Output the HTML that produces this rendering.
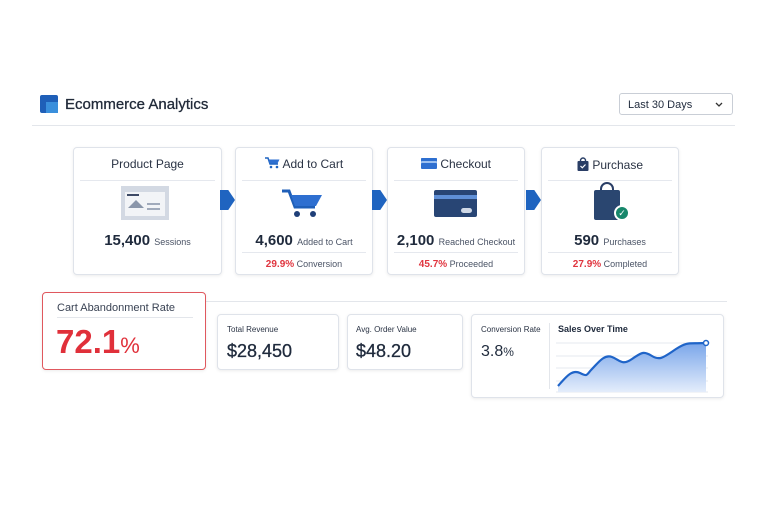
<!DOCTYPE html><html><head><style>
*{margin:0;padding:0;box-sizing:border-box}
body{width:768px;height:512px;background:#fff;font-family:"Liberation Sans",sans-serif;color:#1f2a3c;position:relative;overflow:hidden}
.a{position:absolute}
.card{position:absolute;background:#fff;border:1px solid #dfe3ea;border-radius:4px;box-shadow:0 1px 3px rgba(0,0,0,.08)}
.hd{position:absolute;left:0;right:0;top:9px;text-align:center;font-size:12px;color:#2a3344}
.d1{position:absolute;left:6px;right:6px;top:32px;border-top:1px solid #e5e8ee}
.d2{position:absolute;left:6px;right:6px;top:104px;border-top:1px solid #e5e8ee}
.num{position:absolute;left:0;right:0;top:84px;text-align:center;font-size:15px;font-weight:bold;color:#1f2a3c}
.num span{font-size:9px;font-weight:normal;color:#4a5365}
.pc{position:absolute;left:0;right:0;top:111px;text-align:center;font-size:9px;color:#4a5365}
.pc b{color:#e0353f;font-size:10px}
.ar{position:absolute;width:15px;height:20px;background:#1f64c0;clip-path:polygon(0 0,55% 0,100% 50%,55% 100%,0 100%)}
.lbl{font-size:8px;color:#2a3344}
</style></head><body>
<div class="a" style="left:40px;top:95px;width:18px;height:18px;background:#1f5fb8;border-radius:2px"></div>
<div class="a" style="left:46px;top:102px;width:12px;height:11px;background:#3a8fdc"></div>
<div class="a" style="left:65px;top:96px;font-size:15px;color:#222b3a;-webkit-text-stroke:0.3px #222b3a">Ecommerce Analytics</div>
<div class="a" style="left:619px;top:93px;width:114px;height:22px;border:1px solid #c9ced6;border-radius:3px;font-size:11px;padding:5px 0 0 8px">Last 30 Days<svg style="position:absolute;right:9px;top:8px" width="8" height="5" viewBox="0 0 8 5"><path d="M1 1l3 3 3-3" stroke="#333" stroke-width="1.3" fill="none"/></svg></div>
<div class="a" style="left:32px;top:125px;width:703px;border-top:1px solid #e3e6eb"></div>

<div class="card" style="left:73px;top:147px;width:149px;height:128px">
<div class="hd">Product Page</div><div class="d1"></div>
<div class="a" style="left:47px;top:38px;width:48px;height:34px;background:#d3d9e3"></div>
<div class="a" style="left:51px;top:44px;width:40px;height:24px;background:#f2f4f7"></div>
<div class="a" style="left:53px;top:46px;width:12px;height:2px;background:#3d4a66"></div>
<div class="a" style="left:54px;top:52px;width:0;height:0;border-left:8px solid transparent;border-right:8px solid transparent;border-bottom:8px solid #8a96aa"></div>
<div class="a" style="left:73px;top:55px;width:13px;height:2px;background:#a0aabb"></div>
<div class="a" style="left:73px;top:60px;width:13px;height:2px;background:#a0aabb"></div>
<div class="num">15,400 <span>Sessions</span></div>
</div>
<div class="ar" style="left:220px;top:190px"></div>
<div class="card" style="left:235px;top:147px;width:138px;height:128px">
<div class="hd"><svg width="15" height="12" viewBox="0 0 15 12" style="vertical-align:-1px"><path d="M0 1h3l2 6h8" stroke="#1f64c0" stroke-width="1.5" fill="none"/><path d="M3.5 2.5h11l-2 4h-8z" fill="#2e6fd0"/><circle cx="6" cy="10" r="1.3" fill="#1f64c0"/><circle cx="12" cy="10" r="1.3" fill="#1f64c0"/></svg> Add to Cart</div><div class="d1"></div>
<svg class="a" style="left:44px;top:40px" width="44" height="30" viewBox="0 0 44 30"><path d="M2 3h7l6 16h20" stroke="#1f5fb8" stroke-width="3" fill="none"/><path d="M11 7h31l-6 11H15z" fill="#2e6fd0"/><circle cx="17" cy="26" r="3" fill="#1f3f78"/><circle cx="33" cy="26" r="3" fill="#1f3f78"/></svg>
<div class="num">4,600 <span>Added to Cart</span></div><div class="d2"></div>
<div class="pc"><b>29.9%</b> Conversion</div>
</div>
<div class="ar" style="left:372px;top:190px"></div>
<div class="card" style="left:387px;top:147px;width:138px;height:128px">
<div class="hd"><span style="display:inline-block;width:16px;height:11px;background:#2e6fd0;border-radius:1px;vertical-align:-1px;box-shadow:inset 0 3px 0 #2e6fd0,inset 0 5px 0 #9cc0f0"></span> Checkout</div><div class="d1"></div>
<div class="a" style="left:46px;top:42px;width:43px;height:27px;background:#284574;border-radius:2px"></div>
<div class="a" style="left:46px;top:47px;width:43px;height:4px;background:#5f8fd6"></div>
<div class="a" style="left:73px;top:60px;width:11px;height:5px;background:#cfd8e6;border-radius:3px"></div>
<div class="num">2,100 <span>Reached Checkout</span></div><div class="d2"></div>
<div class="pc"><b>45.7%</b> Proceeded</div>
</div>
<div class="ar" style="left:526px;top:190px"></div>
<div class="card" style="left:541px;top:147px;width:138px;height:128px">
<div class="hd"><svg width="12" height="14" viewBox="0 0 12 14" style="vertical-align:-2px"><path d="M3.5 5V3.5a2.5 2.5 0 0 1 5 0V5" stroke="#2a3e66" stroke-width="1.4" fill="none"/><rect x="0.5" y="4" width="11" height="10" rx="1" fill="#2a3e66"/><path d="M3.5 9l1.8 1.8 3.2-3.3" stroke="#fff" stroke-width="1.2" fill="none"/></svg> Purchase</div><div class="d1"></div>
<div class="a" style="left:58px;top:34px;width:14px;height:14px;border:2px solid #2a3e66;border-radius:7px 7px 0 0"></div>
<div class="a" style="left:52px;top:42px;width:26px;height:30px;background:#2a4670;border-radius:2px"></div>
<div class="a" style="left:72px;top:57px;width:16px;height:16px;background:#17876b;border:2px solid #fff;border-radius:50%;color:#fff;font-size:9px;text-align:center;line-height:12px">&#10003;</div>
<div class="num">590 <span>Purchases</span></div><div class="d2"></div>
<div class="pc"><b>27.9%</b> Completed</div>
</div>

<div class="a" style="left:205px;top:301px;width:522px;border-top:1px solid #e3e6eb"></div>
<div class="card" style="left:42px;top:292px;width:164px;height:78px;border:1.5px solid #e0585e">
<div class="a" style="left:14px;top:9px;font-size:11px;color:#3a4354">Cart Abandonment Rate</div>
<div class="a" style="left:14px;top:24px;width:136px;border-top:1px solid #e3e6eb"></div>
<div class="a" style="left:13px;top:30px;font-size:33px;font-weight:bold;color:#e0303a">72.1<span style="font-size:22px;font-weight:normal">%</span></div>
</div>
<div class="card" style="left:217px;top:314px;width:122px;height:56px">
<div class="a lbl" style="left:9px;top:10px">Total Revenue</div>
<div class="a" style="left:9px;top:26px;font-size:18px;-webkit-text-stroke:0.3px #1f2a3c">$28,450</div></div>
<div class="card" style="left:347px;top:314px;width:116px;height:56px">
<div class="a lbl" style="left:8px;top:10px">Avg. Order Value</div>
<div class="a" style="left:8px;top:26px;font-size:18px;-webkit-text-stroke:0.3px #1f2a3c">$48.20</div></div>
<div class="card" style="left:471px;top:314px;width:253px;height:84px">
<div class="a lbl" style="left:9px;top:10px">Conversion Rate</div>
<div class="a" style="left:9px;top:28px;font-size:16px">3.8<span style="font-size:12px">%</span></div>
<div class="a" style="left:77px;top:8px;height:66px;border-left:1px solid #e3e6eb"></div>
<div class="a" style="left:86px;top:9px;font-size:9px;font-weight:bold">Sales Over Time</div>
<svg class="a" style="left:84px;top:24px" width="160" height="56" viewBox="0 0 160 56">
<g stroke="#e6e9ef" stroke-width="1"><line x1="0" y1="4" x2="152" y2="4"/><line x1="0" y1="17" x2="152" y2="17"/><line x1="0" y1="29" x2="152" y2="29"/><line x1="0" y1="42" x2="152" y2="42"/><line x1="0" y1="53" x2="152" y2="53"/></g>
<defs><linearGradient id="g" x1="0" y1="0" x2="0" y2="1"><stop offset="0" stop-color="#7aa6ea"/><stop offset="1" stop-color="#e4edfb"/></linearGradient></defs>
<path d="M2 47C10 38 16 30 24 34S30 36 36 30 48 15 56 18 66 27 76 20 88 12 96 17 108 18 120 10 134 5 150 4V53H2Z" fill="url(#g)"/>
<path d="M2 47C10 38 16 30 24 34S30 36 36 30 48 15 56 18 66 27 76 20 88 12 96 17 108 18 120 10 134 5 150 4" fill="none" stroke="#1f64c8" stroke-width="2.2"/>
<circle cx="150" cy="4" r="2.5" fill="#fff" stroke="#1f64c8" stroke-width="1.5"/></svg>
</div>
</body></html>
